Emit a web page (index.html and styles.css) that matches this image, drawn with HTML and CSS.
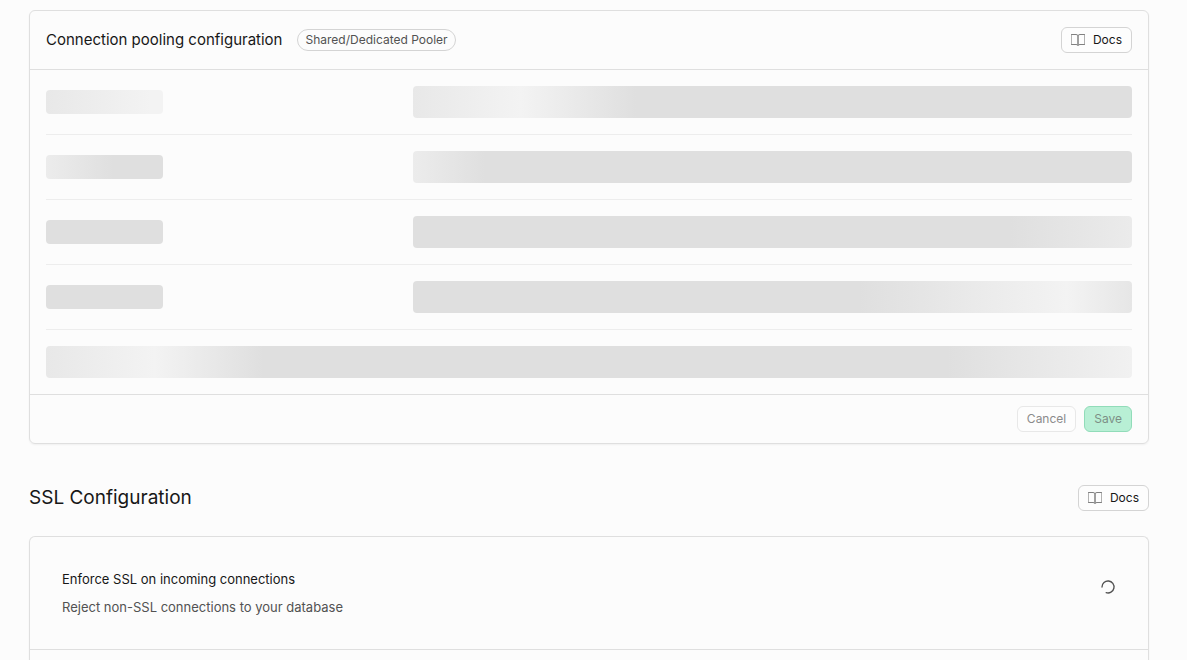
FILE: index.html
```
<!DOCTYPE html>
<html lang="en">
<head>
    <meta charset="UTF-8">
    <meta name="viewport" content="width=device-width, initial-scale=1.0">
    <title>Database Settings</title>
    <link rel="stylesheet" href="styles.css">
</head>
<body>
    <main class="page">
        <section class="card">
            <header class="card-header">
                <div class="card-title">
                    <h2>Connection pooling configuration</h2>
                    <span class="badge">Shared/Dedicated Pooler</span>
                </div>
                <a href="#" class="btn">
                    <svg class="icon" viewBox="0 0 14 14"><path d="M.5 1.500H5Q7 1.500 7 3v9.500Q6.500 11.500 5 11.500H.5z"/><path d="M13.500 1.500H9Q7 1.500 7 3v9.500Q7.500 11.500 9 11.500h4.500z"/></svg>
                    <span>Docs</span>
                </a>
            </header>
            <div class="card-body">
                <div class="row">
                    <div class="label-cell"><div class="skeleton skeleton-label shimmer-in"></div></div>
                    <div class="skeleton shimmer-start"></div>
                </div>
                <div class="row">
                    <div class="label-cell"><div class="skeleton skeleton-label shimmer-out"></div></div>
                    <div class="skeleton shimmer-leaving"></div>
                </div>
                <div class="row">
                    <div class="label-cell"><div class="skeleton skeleton-label"></div></div>
                    <div class="skeleton shimmer-entering"></div>
                </div>
                <div class="row">
                    <div class="label-cell"><div class="skeleton skeleton-label"></div></div>
                    <div class="skeleton shimmer-end"></div>
                </div>
                <div class="row row-full">
                    <div class="skeleton shimmer-both"></div>
                </div>
            </div>
            <footer class="card-footer">
                <button type="button" class="btn" disabled>Cancel</button>
                <button type="button" class="btn btn-primary" disabled>Save</button>
            </footer>
        </section>

        <div class="section-header">
            <h1>SSL Configuration</h1>
            <a href="#" class="btn">
                <svg class="icon" viewBox="0 0 14 14"><path d="M.5 1.500H5Q7 1.500 7 3v9.500Q6.500 11.500 5 11.500H.5z"/><path d="M13.500 1.500H9Q7 1.500 7 3v9.500Q7.500 11.500 9 11.500h4.500z"/></svg>
                <span>Docs</span>
            </a>
        </div>

        <section class="card card-open">
            <div class="setting">
                <div class="setting-text">
                    <h3>Enforce SSL on incoming connections</h3>
                    <p>Reject non-SSL connections to your database</p>
                </div>
                <div class="setting-control">
                    <svg class="spinner" viewBox="0 0 24 24"><path d="M21 12a9 9 0 1 1-6.219-8.56"/></svg>
                </div>
            </div>
        </section>
    </main>
</body>
</html>
```
FILE: styles.css
```
* {
    box-sizing: border-box;
}

body {
    margin: 0;
    background: #fcfcfc;
    color: #171717;
    font-family: Inter, "Liberation Sans", sans-serif;
    font-size: 13px;
    line-height: 20px;
}

h1, h2, h3, p {
    margin: 0;
    font-size: 13px;
    font-weight: 400;
}

.page {
    display: flex;
    flex-direction: column;
    min-height: 100vh;
    padding: 10px 38px 0 29px;
}

.card {
    border: 1px solid #dfdfdf;
    border-radius: 6px;
    box-shadow: 0 1px 2px rgba(0, 0, 0, 0.05);
}

.card-open {
    flex: 1;
    border-bottom: 0;
    border-radius: 6px 6px 0 0;
}

.card-header {
    display: flex;
    align-items: center;
    justify-content: space-between;
    padding: 16px;
    border-bottom: 1px solid #dfdfdf;
}

.card-title {
    display: flex;
    align-items: center;
    gap: 15px;
}

.card-title h2 {
    font-size: 15px;
}

.badge {
    padding: 0 7px;
    border: 1px solid #d4d4d4;
    border-radius: 11px;
    color: #525252;
    font-size: 12px;
}

.btn {
    display: inline-flex;
    align-items: center;
    gap: 8px;
    height: 26px;
    padding: 0 9px;
    border: 1px solid #d4d4d4;
    border-radius: 6px;
    background: #fdfdfd;
    color: #171717;
    font-family: inherit;
    font-size: 12px;
    line-height: 16px;
    text-decoration: none;
}

.btn:disabled {
    border-color: #e8e8e8;
    color: #8b8b8b;
}

.btn-primary:disabled {
    border-color: #91dcb9;
    background: #b8efd5;
    color: #7d8f86;
}

.icon {
    width: 14px;
    height: 14px;
    fill: none;
    stroke: #808080;
    stroke-width: 1;
    stroke-linecap: round;
    stroke-linejoin: round;
}

.card-body {
    padding: 0 16px;
}

.row {
    display: grid;
    grid-template-columns: repeat(12, 1fr);
    column-gap: 16px;
    align-items: center;
    padding: 16px 0;
    border-bottom: 1px solid #ededed;
}

.row:last-child {
    border-bottom: 0;
}

.label-cell {
    grid-column: span 4;
}

.skeleton {
    grid-column: span 8;
    height: 32px;
    border-radius: 4px;
    background: #dfdfdf;
}

.row-full .skeleton {
    grid-column: span 12;
}

.skeleton-label {
    width: calc(100% / 3);
    height: 24px;
}

/* shimmer phases */
.shimmer-in {
    background: linear-gradient(to right, #e8e8e8, #f3f3f3 90%);
}

.shimmer-out {
    background: linear-gradient(to right, #ececec, #dfdfdf 58%);
}

.shimmer-start {
    background: linear-gradient(to right, #e8e8e8, #f3f3f3 15%, #dfdfdf 31%);
}

.shimmer-leaving {
    background: linear-gradient(to right, #ececec, #dfdfdf 10%);
}

.shimmer-entering {
    background: linear-gradient(to right, #dfdfdf 83%, #ebebeb);
}

.shimmer-end {
    background: linear-gradient(to right, #dfdfdf 62%, #f3f3f3 91%, #e6e6e6);
}

.shimmer-both {
    background: linear-gradient(to right, #e8e8e8, #f3f3f3 10%, #dfdfdf 20%, #dfdfdf 83%, #f1f1f1);
}

.card-footer {
    display: flex;
    justify-content: flex-end;
    gap: 8px;
    padding: 11px 16px;
    border-top: 1px solid #dfdfdf;
}

.section-header {
    display: flex;
    align-items: center;
    justify-content: space-between;
    margin: 41px 0 25px;
}

.section-header h1 {
    font-size: 19px;
}

.setting {
    display: flex;
    align-items: flex-start;
    justify-content: space-between;
    padding: 32px;
    border-bottom: 1px solid #dfdfdf;
}

.setting-text {
    display: flex;
    flex-direction: column;
    gap: 8px;
}

.setting-text p {
    color: #525252;
}

.setting-control {
    display: flex;
    align-items: center;
    height: 36px;
}

.spinner {
    width: 16px;
    height: 16px;
    fill: none;
    stroke: #525252;
    stroke-width: 2;
    stroke-linecap: round;
    transform: rotate(180deg);
}
```
